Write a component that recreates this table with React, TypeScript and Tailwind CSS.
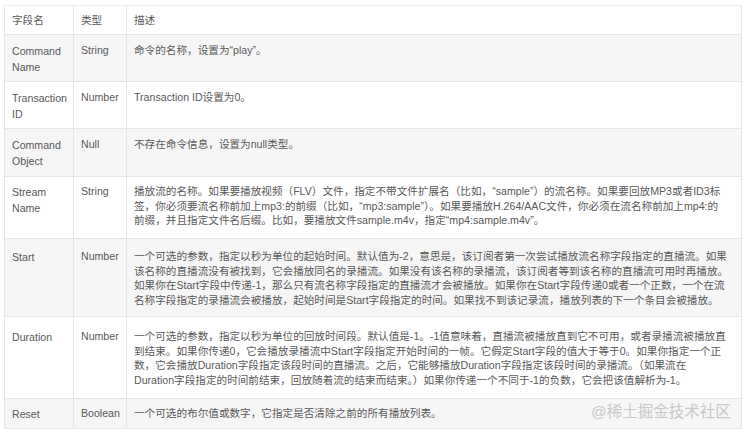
import React from 'react'

type Row = {
    name: string[]
    type: string
    desc: string[]
    h: string
    pt: string
}

const rows: Row[] = [
    { name: ['Command', 'Name'], type: 'String', desc: ['命令的名称，设置为“play”。'], h: 'h-[47px]', pt: 'pt-[8px]' },
    { name: ['Transaction', 'ID'], type: 'Number', desc: ['Transaction ID设置为0。'], h: 'h-[47px]', pt: 'pt-[8px]' },
    { name: ['Command', 'Object'], type: 'Null', desc: ['不存在命令信息，设置为null类型。'], h: 'h-[48px]', pt: 'pt-[8px]' },
    {
        name: ['Stream', 'Name'],
        type: 'String',
        desc: [
            '播放流的名称。如果要播放视频（FLV）文件，指定不带文件扩展名（比如，“sample”）的流名称。如果要回放MP3或者ID3标',
            '签，你必须要流名称前加上mp3:的前缀（比如，“mp3:sample”）。如果要播放H.264/AAC文件，你必须在流名称前加上mp4:的',
            '前缀，并且指定文件名后缀。比如，要播放文件sample.m4v，指定“mp4:sample.m4v”。',
        ],
        h: 'h-[62px]',
        pt: 'pt-[7px]',
    },
    {
        name: ['Start'],
        type: 'Number',
        desc: [
            '一个可选的参数，指定以秒为单位的起始时间。默认值为-2，意思是，该订阅者第一次尝试播放流名称字段指定的直播流。如果',
            '该名称的直播流没有被找到，它会播放同名的录播流。如果没有该名称的录播流，该订阅者等到该名称的直播流可用时再播放。',
            '如果你在Start字段中传递-1，那么只有流名称字段指定的直播流才会被播放。如果你在Start字段传递0或者一个正数，一个在流',
            '名称字段指定的录播流会被播放，起始时间是Start字段指定的时间。如果找不到该记录流，播放列表的下一个条目会被播放。',
        ],
        h: 'h-[78px]',
        pt: 'pt-[10px]',
    },
    {
        name: ['Duration'],
        type: 'Number',
        desc: [
            '一个可选的参数，指定以秒为单位的回放时间段。默认值是-1。-1值意味着，直播流被播放直到它不可用，或者录播流被播放直',
            '到结束。如果你传递0，它会播放录播流中Start字段指定开始时间的一帧。它假定Start字段的值大于等于0。如果你指定一个正',
            '数，它会播放Duration字段指定该段时间的直播流。之后，它能够播放Duration字段指定该段时间的录播流。（如果流在',
            'Duration字段指定的时间前结束，回放随着流的结束而结束。）如果你传递一个不同于-1的负数，它会把该值解析为-1。',
        ],
        h: 'h-[82px]',
        pt: 'pt-[12px]',
    },
    { name: ['Reset'], type: 'Boolean', desc: ['一个可选的布尔值或数字，它指定是否清除之前的所有播放列表。'], h: 'h-[30px]', pt: 'pt-[7px]' },
]

export default function App() {
    return (
        <div
            className="relative w-[746px] h-[434px] bg-white overflow-hidden pt-[5px] pl-[4px]"
            style={{ fontFamily: '"Liberation Sans", "Noto Sans CJK SC", sans-serif' }}
        >
            <table className="border-collapse w-[738px] table-fixed text-[10.6px] leading-[15px] text-[#595959]">
                <colgroup>
                    <col className="w-[69px]" />
                    <col className="w-[53px]" />
                    <col />
                </colgroup>
                <thead>
                    <tr className="h-[29px] bg-white">
                        <th className="border border-[#e6e6e6] border-t-[#eeeeee] px-[7px] pt-[7px] align-top text-left font-normal">字段名</th>
                        <th className="border border-[#e6e6e6] border-t-[#eeeeee] px-[7px] pt-[7px] align-top text-left font-normal">类型</th>
                        <th className="border border-[#e6e6e6] border-t-[#eeeeee] px-[7px] pt-[7px] align-top text-left font-normal">描述</th>
                    </tr>
                </thead>
                <tbody>
                    {rows.map((row, i) => (
                        <tr key={i} className={`${row.h} ${i % 2 === 0 ? 'bg-[#f6f6f6]' : 'bg-white'}`}>
                            <td className={`border border-[#e6e6e6] px-[7px] align-top leading-[16px] ${row.pt}`}>
                                {row.name.map((n) => (
                                    <div key={n}>{n}</div>
                                ))}
                            </td>
                            <td className={`border border-[#e6e6e6] px-[7px] align-top ${row.pt}`}>{row.type}</td>
                            <td className={`border border-[#e6e6e6] px-[7px] align-top whitespace-nowrap text-[10.62px] leading-[14.5px] ${row.pt}`}>
                                {row.desc.map((d, j) => (
                                    <div key={j}>{d}</div>
                                ))}
                            </td>
                        </tr>
                    ))}
                </tbody>
            </table>

            {/* watermark */}
            <div className="absolute left-[591px] top-[403px] whitespace-nowrap text-[15.5px] leading-[18px] text-[#c9c9c9]">
                @稀土掘金技术社区
            </div>
        </div>
    )
}
